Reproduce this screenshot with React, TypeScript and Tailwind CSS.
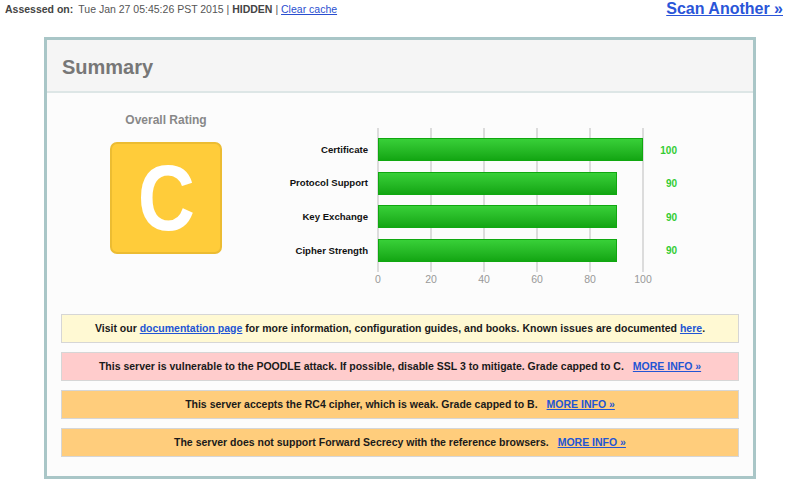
import React from "react";

const bars = [
  { label: "Certificate", value: 100 },
  { label: "Protocol Support", value: 90 },
  { label: "Key Exchange", value: 90 },
  { label: "Cipher Strength", value: 90 },
];

const ticks = [0, 20, 40, 60, 80, 100];

function MoreInfo() {
  return (
    <a href="#" className="ml-[9px] text-[#2255d4] underline">
      MORE INFO »
    </a>
  );
}

export default function App() {
  return (
    <div className="w-[800px] h-[485px] overflow-hidden bg-white font-['Liberation_Sans',Arial,sans-serif] text-[#222]">
      <div className="flex h-[37px] items-start justify-between">
        <div className="pl-[5px] pt-[2px] text-[10.5px] leading-[14px] text-[#333]">
          <span className="font-bold text-[#444]">Assessed on:</span>
          <span className="ml-[5px] text-[#555]">Tue Jan 27 05:45:26 PST 2015</span>
          <span className="text-[#555]"> | </span>
          <span className="font-bold text-[#444]">HIDDEN</span>
          <span className="text-[#555]"> | </span>
          <a href="#" className="text-[#2a4fd0] underline">
            Clear cache
          </a>
        </div>
        <a href="#" className="pr-[17px] text-[16px] leading-[18px] font-bold text-[#2a55d8] underline">
          Scan Another »
        </a>
      </div>

      <div className="mx-[44px] h-[442px] border-[3px] border-[#a9c6c7] bg-[#fcfcfc]">
        <div className="flex h-[53px] items-center border-b-2 border-[#dde6e6] bg-[#f5f5f5] pl-[15px] pt-[2px]">
          <span className="text-[20px] font-bold text-[#777]">Summary</span>
        </div>

        <div className="flex flex-col">
          <div className="flex">
            <div className="flex w-[238px] flex-col items-center pt-[19px]">
              <div className="text-[12px] leading-[16px] font-bold text-[#888]">Overall Rating</div>
              <div className="mt-[14px] flex h-[112px] w-[112px] items-center justify-center rounded-[7px] border-2 border-[#ecbc32] bg-[#ffcc3a]">
                <span className="scale-x-[0.86] text-[92px] leading-none font-bold text-white">C</span>
              </div>
            </div>

            <div className="flex flex-col pt-[35px]">
              <div className="flex">
                <div className="flex w-[93px] flex-col gap-[10.67px] pt-[10px] pr-[10px]">
                  {bars.map((b) => (
                    <div key={b.label} className="flex h-[23px] items-center justify-end pt-[1px] text-[9.6px] font-bold text-[#111] whitespace-nowrap">
                      {b.label}
                    </div>
                  ))}
                </div>
                <div className="relative h-[142px] w-[265px]">
                  {ticks.map((t) => (
                    <div
                      key={t}
                      className="absolute top-0 h-[144px] w-[2px] bg-[#dcdcdc]"
                      style={{ left: `${(t / 100) * 265 - 1}px` }}
                    />
                  ))}
                  <div className="relative flex flex-col gap-[10.67px] pt-[10px]">
                    {bars.map((b) => (
                      <div key={b.label} className="h-[23px]">
                        <div
                          className="h-[23px] border border-[#10a810] bg-linear-to-b from-[#38d038] to-[#12a612]"
                          style={{ width: `${(b.value / 100) * 265}px` }}
                        />
                      </div>
                    ))}
                  </div>
                </div>
                <div className="flex w-[34px] flex-col gap-[10.67px] pt-[10px]">
                  {bars.map((b) => (
                    <div key={b.label} className="flex h-[23px] items-center justify-end pt-[1px] text-[10px] font-bold text-[#33cc33]">
                      {b.value}
                    </div>
                  ))}
                </div>
              </div>
              <div className="relative ml-[93px] h-[16px] w-[265px]">
                {ticks.map((t) => (
                  <span
                    key={t}
                    className="absolute top-[2px] -translate-x-1/2 text-[10.5px] leading-[14px] text-[#999]"
                    style={{ left: `${(t / 100) * 265}px` }}
                  >
                    {t}
                  </span>
                ))}
              </div>
            </div>
          </div>

          <div className="mx-[14px] mt-[28px] flex flex-col gap-[9px] text-[10.5px] font-bold text-[#1a1a1a]">
            <div className="flex h-[29px] items-center justify-center border border-[#d6d6d6] bg-[#fff9d3]">
              <span>
                Visit our{" "}
                <a href="#" className="text-[#2255d4] underline">
                  documentation page
                </a>{" "}
                for more information, configuration guides, and books. Known issues are documented{" "}
                <a href="#" className="text-[#2255d4] underline">
                  here
                </a>
                .
              </span>
            </div>
            <div className="flex h-[29px] items-center justify-center border border-[#d6d6d6] bg-[#ffcccc]">
              <span>This server is vulnerable to the POODLE attack. If possible, disable SSL 3 to mitigate. Grade capped to C.</span>
              <MoreInfo />
            </div>
            <div className="flex h-[29px] items-center justify-center border border-[#d6d6d6] bg-[#ffcd7c]">
              <span>This server accepts the RC4 cipher, which is weak. Grade capped to B.</span>
              <MoreInfo />
            </div>
            <div className="flex h-[29px] items-center justify-center border border-[#d6d6d6] bg-[#ffcd7c]">
              <span>The server does not support Forward Secrecy with the reference browsers.</span>
              <MoreInfo />
            </div>
          </div>
        </div>
      </div>
    </div>
  );
}
